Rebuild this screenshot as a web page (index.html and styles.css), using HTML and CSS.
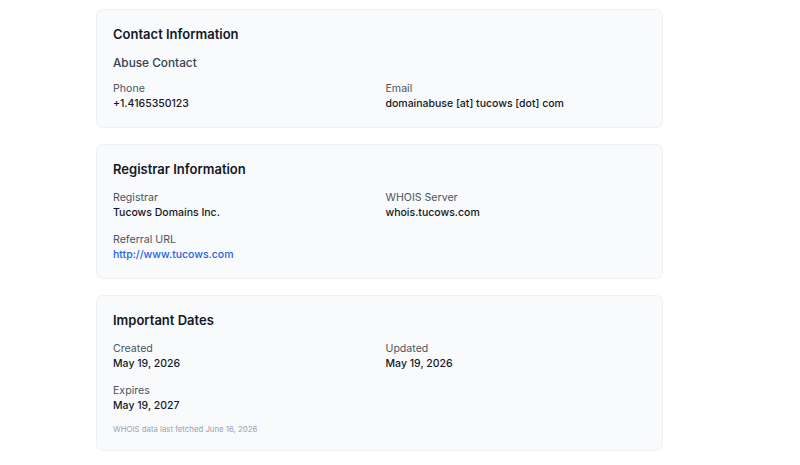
FILE: index.html
```html
<!DOCTYPE html>
<html lang="en">
<head>
    <meta charset="UTF-8" />
    <title>WHOIS Details</title>
    <link rel="stylesheet" href="styles.css">
</head>
<body>
<div class="sections">
    <section class="card">
        <h2>Contact Information</h2>
        <h3>Abuse Contact</h3>
        <div class="fields">
            <div class="field">
                <span class="label">Phone</span>
                <span class="value">+1.4165350123</span>
            </div>
            <div class="field">
                <span class="label">Email</span>
                <span class="value">domainabuse [at] tucows [dot] com</span>
            </div>
        </div>
    </section>

    <section class="card">
        <h2>Registrar Information</h2>
        <div class="fields">
            <div class="field">
                <span class="label">Registrar</span>
                <span class="value">Tucows Domains Inc.</span>
            </div>
            <div class="field">
                <span class="label">WHOIS Server</span>
                <span class="value">whois.tucows.com</span>
            </div>
            <div class="field">
                <span class="label">Referral URL</span>
                <a class="value link" href="http://www.tucows.com">http://www.tucows.com</a>
            </div>
        </div>
    </section>

    <section class="card">
        <h2>Important Dates</h2>
        <div class="fields">
            <div class="field">
                <span class="label">Created</span>
                <span class="value">May 19, 2026</span>
            </div>
            <div class="field">
                <span class="label">Updated</span>
                <span class="value">May 19, 2026</span>
            </div>
            <div class="field">
                <span class="label">Expires</span>
                <span class="value">May 19, 2027</span>
            </div>
        </div>
        <p class="fetched">WHOIS data last fetched June 16, 2026</p>
    </section>
</div>
</body>
</html>
```

FILE: styles.css
```css
body {
    font-family: Inter, "Noto Sans", sans-serif;
    background: #fff;
    margin: 0;
    color: #111827;
}
.sections {
    display: flex;
    flex-direction: column;
    gap: 16px;
    width: 567px;
    padding: 9px 0 0 96px;
}
.card {
    background: #f9fafb;
    border: 1px solid #eff0f2;
    border-radius: 7px;
    padding: 16px 16px 15px;
}
.card h2 {
    font-size: 13px;
    line-height: 17px;
    font-weight: 600;
    margin: 0 0 12px;
    color: #111827;
}
.card h3 {
    font-size: 11.8px;
    line-height: 16px;
    font-weight: 500;
    margin: 0 0 9.5px;
    color: #374151;
}
.fields {
    display: grid;
    grid-template-columns: 1fr 1fr;
    column-gap: 12px;
    row-gap: 11px;
}
.field { display: flex; flex-direction: column; }
.label {
    font-size: 10.6px;
    line-height: 15px;
    color: #4b5563;
}
.value {
    font-size: 10.5px;
    line-height: 16px;
    font-weight: 500;
    color: #111827;
}
.link { color: #2563eb; text-decoration: none; }
.fetched {
    font-size: 7.8px;
    line-height: 12px;
    color: #9ca3af;
    margin: 9.5px 0 0;
}
```
